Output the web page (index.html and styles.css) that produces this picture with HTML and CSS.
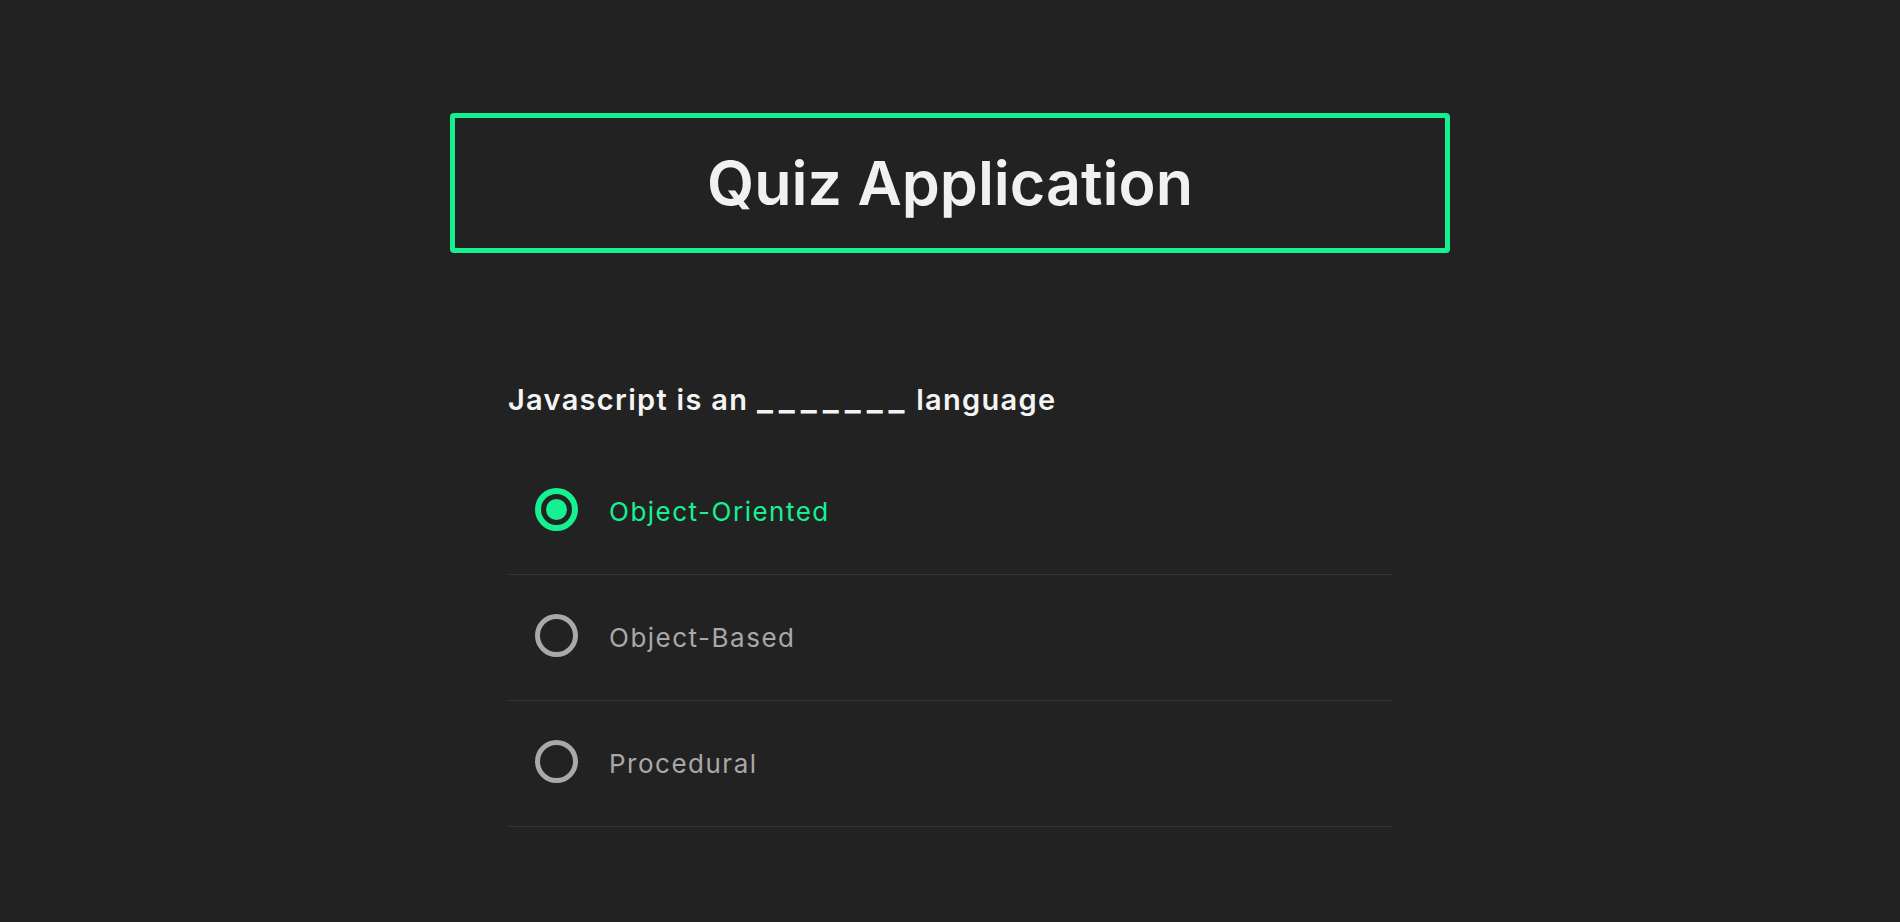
FILE: index.html
```html
<!DOCTYPE html>
<html lang="en">
<head>
<meta charset="utf-8">
<title>Quiz Application</title>
<link rel="stylesheet" href="styles.css">
</head>
<body>
<main class="app">
  <header class="title-box">
    <h1 class="title">Quiz Application</h1>
  </header>
  <section class="quiz">
    <h2 class="question">Javascript is an <span class="blank">_______</span> language</h2>
    <ul class="options">
      <li class="option selected">
        <span class="radio"><span class="dot"></span></span>
        <span class="label">Object-Oriented</span>
      </li>
      <li class="option">
        <span class="radio"></span>
        <span class="label">Object-Based</span>
      </li>
      <li class="option">
        <span class="radio"></span>
        <span class="label">Procedural</span>
      </li>
    </ul>
  </section>
</main>
</body>
</html>
```
FILE: styles.css
```css
* { box-sizing: border-box; }
html, body {
  margin: 0;
  padding: 0;
  background: #222222;
  font-family: Inter, "Noto Sans", sans-serif;
  color: #f2f2f2;
}
.app {
  width: 1000px;
  margin: 113px auto 0;
}
.title-box {
  height: 140px;
  border: 5px solid #15f191;
  border-radius: 4px;
  display: flex;
  align-items: center;
  justify-content: center;
}
.title {
  margin: 0;
  font-size: 61px;
  font-weight: 600;
  color: #f1f1f1;
  line-height: 1;
}
.quiz {
  padding: 0 58px;
  margin-top: 127px;
}
.question {
  margin: 0;
  font-size: 29px;
  font-weight: 600;
  line-height: 40px;
  letter-spacing: 1.3px;
  color: #f4f4f4;
}
.blank {
  font-size: 34px;
  letter-spacing: 6px;
  margin-right: -3px;
  line-height: 0;
}
.options {
  list-style: none;
  margin: 29px 0 0;
  padding: 0;
}
.option {
  height: 126px;
  padding: 0 0 5px 27px;
  border-bottom: 1px solid #353535;
  display: flex;
  align-items: center;
  gap: 31px;
  color: #a8a8a8;
  font-size: 26px;
  font-weight: 400;
  letter-spacing: 1.5px;
}
.label {
  padding-top: 5px;
}
.radio {
  width: 43px;
  height: 43px;
  border: 5px solid #a9a9a9;
  border-radius: 50%;
  display: flex;
  align-items: center;
  justify-content: center;
  flex: none;
}
.option.selected .radio {
  border: 6px solid #15f191;
}
.dot {
  width: 21px;
  height: 21px;
  border-radius: 50%;
  background: #15f191;
}
.option.selected .label {
  color: #15f191;
}
```
